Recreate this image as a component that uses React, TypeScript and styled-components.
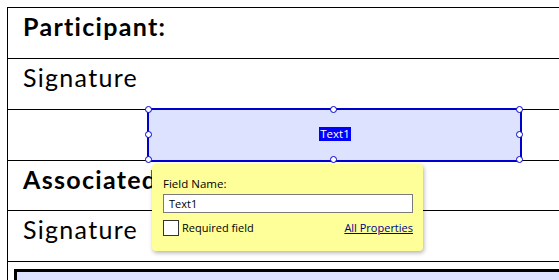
import * as React from "react";
import styled, { createGlobalStyle } from "styled-components";

const GlobalStyle = createGlobalStyle`
  html, body {
    margin: 0;
    padding: 0;
    background: #ffffff;
    overflow: hidden;
  }
`;

const SPage = styled.div`
  position: relative;
  width: 559px;
  height: 280px;
  overflow: hidden;
  padding: 7px 0 0 7px;
  box-sizing: border-box;
`;

const STable = styled.div`
  width: 620px;
  border-top: 1px solid #000;
  border-left: 1px solid #000;
`;

const SRow = styled.div<{ $h?: number }>`
  height: ${(p) => p.$h || 50}px;
  border-bottom: 1px solid #000;
  padding: 3px 0 0 15px;
  box-sizing: border-box;
`;

const SLabel = styled.div<{ $bold?: boolean }>`
  font-family: Lato, "Open Sans", sans-serif;
  font-size: 25px;
  letter-spacing: 1.3px;
  line-height: 30px;
  font-weight: ${(p) => (p.$bold ? 700 : 400)};
  color: #000;
`;

const SLastRow = styled.div`
  padding: 7px 0 0 6px;
`;

const SShadedBox = styled.div`
  height: 40px;
  border: 3px solid #000;
  border-right: none;
  background: #dde3ff;
`;

const SField = styled.div`
  position: absolute;
  left: 147px;
  top: 108px;
  width: 375px;
  height: 54px;
  box-sizing: border-box;
  border: 2px solid #0000cc;
  background: #dde3ff;
  display: flex;
  align-items: center;
  justify-content: center;
`;

const SFieldText = styled.span`
  font-family: "Open Sans", "Noto Sans", sans-serif;
  font-size: 11.5px;
  line-height: 14px;
  color: #fff;
  background: #0000ff;
  padding: 0 1px;
  margin-top: -2px;
  margin-left: 1px;
`;

const SHandle = styled.div<{ $x: string; $y: string }>`
  position: absolute;
  left: ${(p) => p.$x};
  top: ${(p) => p.$y};
  width: 7px;
  height: 7px;
  margin: -4.5px 0 0 -4.5px;
  box-sizing: border-box;
  border: 1.5px solid #0000cc;
  border-radius: 50%;
  background: #fff;
`;

const SPopup = styled.div`
  position: absolute;
  left: 152px;
  top: 164px;
  width: 271px;
  height: 87px;
  box-sizing: border-box;
  padding: 12px 10px 0 11px;
  background: #ffff99;
  border-radius: 4px;
  box-shadow: 1px 2px 4px rgba(0, 0, 0, 0.3);
  font-family: "Open Sans", "Noto Sans", sans-serif;
  font-size: 11px;
  color: #000;
`;

const SCaption = styled.div`
  font-size: 11.5px;
  line-height: 15px;
  margin-bottom: 3px;
`;

const SInput = styled.div`
  height: 19px;
  box-sizing: border-box;
  border: 1px solid #7a7a7a;
  background: #fff;
  padding: 0 5px;
  line-height: 17px;
`;

const SOptions = styled.div`
  display: flex;
  align-items: center;
  margin-top: 7px;
`;

const SCheck = styled.div`
  width: 16px;
  height: 16px;
  box-sizing: border-box;
  border: 1px solid #333;
  background: #fff;
  margin-right: 3px;
`;

const SCheckLabel = styled.span`
  flex: 1;
  line-height: 16px;
`;

const SLink = styled.a`
  color: #00008b;
  text-decoration: underline;
  line-height: 16px;
  cursor: pointer;
`;

const handles = [
  ["0px", "0px"],
  ["50%", "0px"],
  ["100%", "0px"],
  ["0px", "50%"],
  ["100%", "50%"],
  ["0px", "100%"],
  ["50%", "100%"],
  ["100%", "100%"],
];

const App = () => {
  return (
    <SPage>
      <GlobalStyle />
      <STable>
        <SRow $h={51}>
          <SLabel $bold>{"Participant:"}</SLabel>
        </SRow>
        <SRow $h={51}>
          <SLabel>{"Signature"}</SLabel>
        </SRow>
        <SRow $h={51} />
        <SRow $h={50}>
          <SLabel $bold>{"Associated"}</SLabel>
        </SRow>
        <SRow $h={51}>
          <SLabel>{"Signature"}</SLabel>
        </SRow>
        <SLastRow>
          <SShadedBox />
        </SLastRow>
      </STable>

      <SField>
        <SFieldText>{"Text1"}</SFieldText>
        {handles.map(([x, y], i) => (
          <SHandle key={i} $x={x} $y={y} />
        ))}
      </SField>

      <SPopup>
        <SCaption>{"Field Name:"}</SCaption>
        <SInput>{"Text1"}</SInput>
        <SOptions>
          <SCheck />
          <SCheckLabel>{"Required field"}</SCheckLabel>
          <SLink>{"All Properties"}</SLink>
        </SOptions>
      </SPopup>
    </SPage>
  );
};

export default App;
